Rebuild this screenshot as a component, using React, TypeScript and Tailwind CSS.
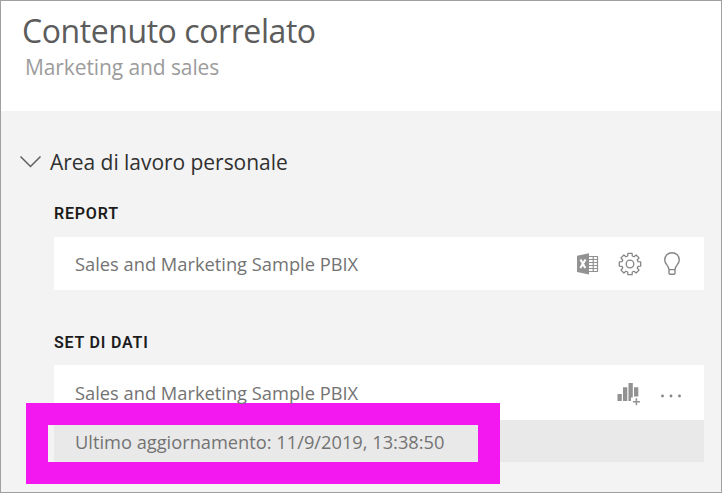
import type { ReactNode } from "react";

function ExcelIcon() {
  return (
    <svg width="23" height="22" viewBox="0 0 23 22" className="block">
      <path d="M1 2.800 13 .300v21.200L1 19Z" fill="#929292" />
      <path d="M4.500 6.500 9.300 15M9.500 6.500 4.300 15" stroke="#fff" strokeWidth="2.100" fill="none" />
      <path d="M13 3.500h8.500v15H13M17.200 3.500v15M13 6.500h8.500M13 9.500h8.500M13 12.500h8.500M13 15.500h8.500" stroke="#929292" strokeWidth="1.200" fill="none" />
    </svg>
  );
}

const gearAngles = [0, 45, 90, 135, 180, 225, 270, 315];

// Outline of an eight-toothed wheel with wide teeth and narrow notches.
const gearOutline = gearAngles
  .map((a, i) => {
    const at = (deg: number, r: number) => {
      const t = (deg * Math.PI) / 180;
      return `${(12 + r * Math.cos(t)).toFixed(2)} ${(12 + r * Math.sin(t)).toFixed(2)}`;
    };
    return `${i === 0 ? "M" : "L"}${at(a - 16, 8.3)}L${at(a - 11, 10.9)}L${at(a + 11, 10.9)}L${at(a + 16, 8.3)}`;
  })
  .join("") + "Z";

function GearIcon() {
  return (
    <svg width="24" height="24" viewBox="0 0 24 24" className="block" fill="none" stroke="#858585" strokeWidth="1.300" strokeLinejoin="round">
      <path d={gearOutline} />
      <circle cx="12" cy="12" r="3.800" />
    </svg>
  );
}

function BulbIcon() {
  return (
    <svg width="18" height="24" viewBox="0 0 18 24" className="block" fill="none" stroke="#858585" strokeWidth="1.400">
      <path d="M6 17.400c0-4-4.300-5.200-4.300-9.400a7.300 7.300 0 0 1 14.600 0c0 4.200-4.300 5.400-4.300 9.400v3.500a1.300 1.300 0 0 1-1.300 1.300H7.300A1.300 1.300 0 0 1 6 20.900ZM6 17.600h6" />
    </svg>
  );
}

function ChartAddIcon() {
  return (
    <svg width="24" height="24" viewBox="0 0 24 24" className="block" fill="#929292">
      <path d="M.500 12h4.300v7H.500ZM6 5.300h4.300V19H6ZM11.500 1h4.300v14.500H14V19h-2.500ZM17 5.300h4.300v9.200H17Z" />
      <path d="M19.400 16.200v7M15.900 19.700h7" stroke="#929292" strokeWidth="1.500" />
    </svg>
  );
}

function Row({ children }: { children: ReactNode }) {
  return (
    <div className="flex items-center bg-white pl-[21px] text-[#737373]">
      <span className="relative z-20 w-[290px] whitespace-nowrap pt-px text-[18.300px] leading-6">
        Sales and Marketing Sample PBIX
      </span>
      {children}
    </div>
  );
}

function SectionTitle({ children }: { children: ReactNode }) {
  return (
    <h3 className="h-6 whitespace-nowrap font-['Roboto',sans-serif] text-[16px] font-semibold leading-6 tracking-[0.800px] text-[#1c1c1c]">
      {children}
    </h3>
  );
}

export default function App() {
  return (
    <div className="relative flex h-[493px] w-[722px] flex-col overflow-hidden border border-[#a0a0a0] bg-[#f3f3f3] font-['Open_Sans','Noto_Sans',sans-serif]">
      <header className="h-[110px] shrink-0 bg-white pl-[21px] pt-[8px]">
        <h1 className="h-[44px] whitespace-nowrap text-[32px] leading-[43px] tracking-[-0.430px] text-[#5c5c5c]">Contenuto correlato</h1>
        <p className="ml-[3px] h-7 whitespace-nowrap text-[21px] leading-7 tracking-[-0.100px] text-[#9c9c9c]">Marketing and sales</p>
      </header>
      <main className="flex flex-col pl-[53px] pr-[17px] pt-[35px]">
        <div className="-ml-[35px] flex h-8 items-center">
          <svg width="23" height="14" viewBox="0 0 23 14" fill="none" stroke="#606060" strokeWidth="1.500">
            <path d="m1.500 1.500 10 10 10-10" />
          </svg>
          <h2 className="ml-[8px] whitespace-nowrap text-[21px] leading-8 tracking-[-0.040px] text-[#303030]">Area di lavoro personale</h2>
        </div>
        <section className="mt-[24px]">
          <SectionTitle>REPORT</SectionTitle>
          <div className="mt-[11px] grid h-[53px]">
            <Row>
              <div className="ml-[211px] flex items-center">
                <ExcelIcon />
                <div className="ml-[19px]"><GearIcon /></div>
                <div className="ml-[21px]"><BulbIcon /></div>
              </div>
            </Row>
          </div>
        </section>
        <section className="mt-[41px]">
          <SectionTitle>SET DI DATI</SectionTitle>
          <div className="mt-[10px] grid h-[55px]">
            <Row>
              <div className="ml-[252px] mt-[3px] flex items-center">
                <ChartAddIcon />
                <svg className="ml-[19px] mt-[3px]" width="22" height="6" viewBox="0 0 22 6" fill="#858585">
                  <circle cx="2.500" cy="3" r="1.400" /><circle cx="11" cy="3" r="1.400" /><circle cx="19.500" cy="3" r="1.400" />
                </svg>
              </div>
            </Row>
          </div>
          <div className="flex h-[42px] items-center bg-[#e9e9e9] pl-[21px] pt-[2px] text-[18.250px] text-[#737373]">
            <span className="whitespace-nowrap">Ultimo aggiornamento: 11/9/2019, 13:38:50</span>
          </div>
        </section>
      </main>
      <div className="absolute left-[25px] top-[402px] z-10 h-[81px] w-[474px] border-[22px] border-[#f318ef]" />
    </div>
  );
}
